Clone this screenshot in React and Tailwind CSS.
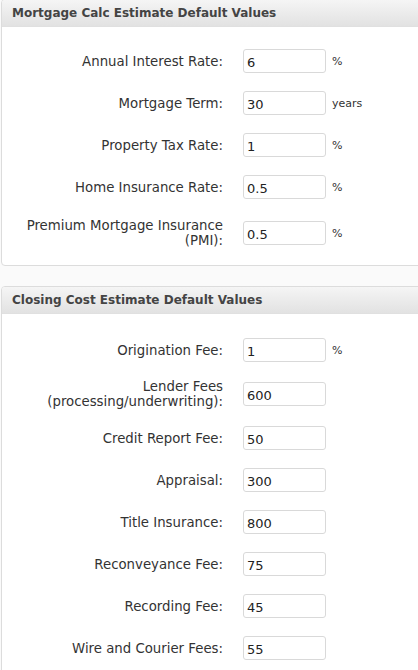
import React from "react";

const mortgageRows = [
  { label: "Annual Interest Rate:", value: "6", unit: "%" },
  { label: "Mortgage Term:", value: "30", unit: "years" },
  { label: "Property Tax Rate:", value: "1", unit: "%" },
  { label: "Home Insurance Rate:", value: "0.5", unit: "%" },
  { label: ["Premium Mortgage Insurance", "(PMI):"], value: "0.5", unit: "%", h: "h-[50px]" },
];

const closingRows = [
  { label: "Origination Fee:", value: "1", unit: "%" },
  { label: ["Lender Fees", "(processing/underwriting):"], value: "600", h: "h-[46px]" },
  { label: "Credit Report Fee:", value: "50" },
  { label: "Appraisal:", value: "300" },
  { label: "Title Insurance:", value: "800" },
  { label: "Reconveyance Fee:", value: "75" },
  { label: "Recording Fee:", value: "45" },
  { label: "Wire and Courier Fees:", value: "55" },
];

const Row = ({ row }) => {
  const multi = Array.isArray(row.label);
  return (
    <div className={`flex items-center ${row.h || "h-[42px]"}`}>
      <label className="w-[221px] shrink-0 text-right text-[13.3px] leading-[15px] text-[#333]">
        {multi
          ? row.label.map((l) => (
              <span key={l} className="block">
                {l}
              </span>
            ))
          : row.label}
      </label>
      <input
        type="text"
        defaultValue={row.value}
        className="ml-[20px] w-[83px] h-[24px] px-[3px] pt-[2px] border border-[#d9d9d9] rounded-[3px] bg-white text-[13px] text-[#222] outline-none"
      />
      {row.unit && (
        <span className="ml-[6px] pt-[3px] text-[11px] text-[#333]">{row.unit}</span>
      )}
    </div>
  );
};

const Panel = ({ title, rows, className, bodyClass }) => (
  <div
    className={`ml-[1px] w-[440px] bg-white border border-[#dcdcdc] rounded-[4px] overflow-hidden ${className}`}
  >
    <div className="h-[27px] flex items-center pl-[10px] bg-gradient-to-b from-[#f5f5f5] to-[#e2e2e2] border-b border-[#e0e0e0]">
      <h2 className="text-[12px] font-bold text-[#444]">{title}</h2>
    </div>
    <div className={bodyClass}>
      {rows.map((r, i) => (
        <Row key={i} row={r} />
      ))}
    </div>
  </div>
);

export default function App() {
  return (
    <div
      className="w-[418px] h-[670px] overflow-hidden bg-[#fafafa]"
      style={{ fontFamily: '"DejaVu Sans", Verdana, sans-serif' }}
    >
      <Panel
        title="Mortgage Calc Estimate Default Values"
        rows={mortgageRows}
        className="-mt-[1px]"
        bodyClass="pt-[13px] pb-[7px]"
      />
      <Panel
        title="Closing Cost Estimate Default Values"
        rows={closingRows}
        className="mt-[20px]"
        bodyClass="pt-[15px] pb-[7px]"
      />
    </div>
  );
}
